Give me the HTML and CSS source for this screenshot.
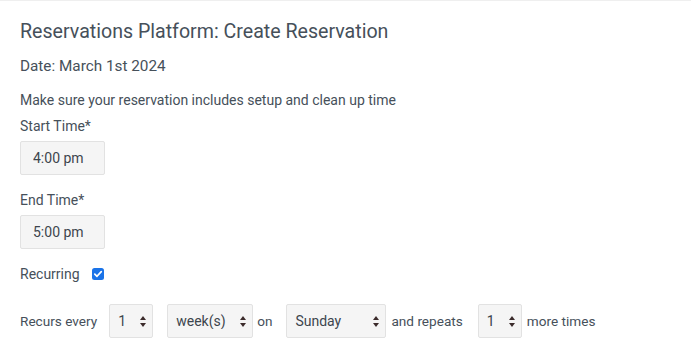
FILE: index.html
```html
<!DOCTYPE html>
<html lang="en">
<head>
<meta charset="utf-8">
<title>Create Reservation</title>
<link rel="stylesheet" href="styles.css">
</head>
<body>
<div class="page">
  <h1 class="title">Reservations Platform: Create Reservation</h1>
  <p class="date">Date: March 1st 2024</p>
  <p class="note">Make sure your reservation includes setup and clean up time</p>
  <div class="field">
    <label class="label" for="start">Start Time*</label>
    <input class="time" id="start" type="text" value="4:00 pm">
  </div>
  <div class="field">
    <label class="label" for="end">End Time*</label>
    <input class="time" id="end" type="text" value="5:00 pm">
  </div>
  <div class="recurring">
    <label class="label" for="rec">Recurring</label>
    <span class="check" id="rec" role="checkbox" aria-checked="true">
      <svg width="12" height="12" viewBox="0 0 12 12"><rect x="0" y="0" width="12" height="12" rx="2.5" fill="#1a73e8"/><path d="M2.8 6.2 L5 8.3 L9.3 3.6" fill="none" stroke="#fff" stroke-width="1.7" stroke-linecap="round" stroke-linejoin="round"/></svg>
    </span>
  </div>
  <div class="recurs">
    <span class="txt">Recurs every</span>
    <select class="sel sel-num"><option>1</option></select>
    <select class="sel sel-unit"><option>week(s)</option></select>
    <span class="txt t-on">on</span>
    <select class="sel sel-day"><option>Sunday</option></select>
    <span class="txt t-rep">and repeats</span>
    <select class="sel sel-num sel-last"><option>1</option></select>
    <span class="txt t-more">more times</span>
  </div>
</div>
</body>
</html>
```
FILE: styles.css
```css
html, body {
  margin: 0;
  padding: 0;
  background: #fff;
}
body {
  font-family: Roboto, "Liberation Sans", sans-serif;
  color: #46505a;
}
.page {
  border-top: 1px solid #efefef;
  padding: 19px 20px 0 20px;
  width: 651px;
}
.title {
  margin: 0 0 12px 0;
  font-size: 19.6px;
  font-weight: 400;
  line-height: 24px;
}
.date {
  margin: 0 0 15px 0;
  font-size: 15.3px;
  line-height: 20px;
}
.note {
  margin: 0 0 8px 0;
  font-size: 14px;
  line-height: 18px;
}
.field {
  display: flex;
  flex-direction: column;
  align-items: flex-start;
  gap: 6px;
  margin-bottom: 16px;
}
.label {
  font-size: 14px;
  line-height: 18px;
}
.time {
  box-sizing: border-box;
  width: 85px;
  height: 34px;
  margin: 0;
  padding: 0 12px;
  border: 1px solid #e2e2e2;
  border-radius: 2px;
  background: #f5f5f5;
  font-family: Roboto, "Liberation Sans", sans-serif;
  font-size: 14px;
  color: #3d454d;
  outline: none;
}
.recurring {
  display: flex;
  align-items: center;
  gap: 12px;
  height: 18px;
  margin-bottom: 21px;
}
.check {
  display: flex;
  width: 12px;
  height: 12px;
}
.recurs {
  display: flex;
  align-items: center;
  height: 34px;
}
.txt {
  font-size: 13.6px;
  line-height: 18px;
  margin-right: 12px;
}
.t-on { margin-left: 4px; margin-right: 14px; }
.t-rep { margin-left: 5px; margin-right: 15px; }
.t-more { margin-left: 5px; margin-right: 0; }
.sel {
  appearance: none;
  -webkit-appearance: none;
  box-sizing: border-box;
  height: 34px;
  margin: 0;
  padding: 0 20px 0 8px;
  border: 1px solid #e2e2e2;
  border-radius: 2px;
  background-color: #f5f5f5;
  background-image: url("data:image/svg+xml,%3Csvg xmlns='http://www.w3.org/2000/svg' width='6' height='11' viewBox='0 0 6 11'%3E%3Cpath d='M3 0 L6 4 L0 4 Z M0 7 L6 7 L3 11 Z' fill='%233b2b2b'/%3E%3C/svg%3E");
  background-repeat: no-repeat;
  background-position: right 6px center;
  background-size: 6px 11px;
  font-family: Roboto, "Liberation Sans", sans-serif;
  font-size: 14px;
  color: #3d454d;
  outline: none;
}
.sel-num { width: 44px; margin-right: 14px; }
.sel-unit { width: 86px; }
.sel-day { width: 100px; }
.sel-last { margin-right: 0; }
```
